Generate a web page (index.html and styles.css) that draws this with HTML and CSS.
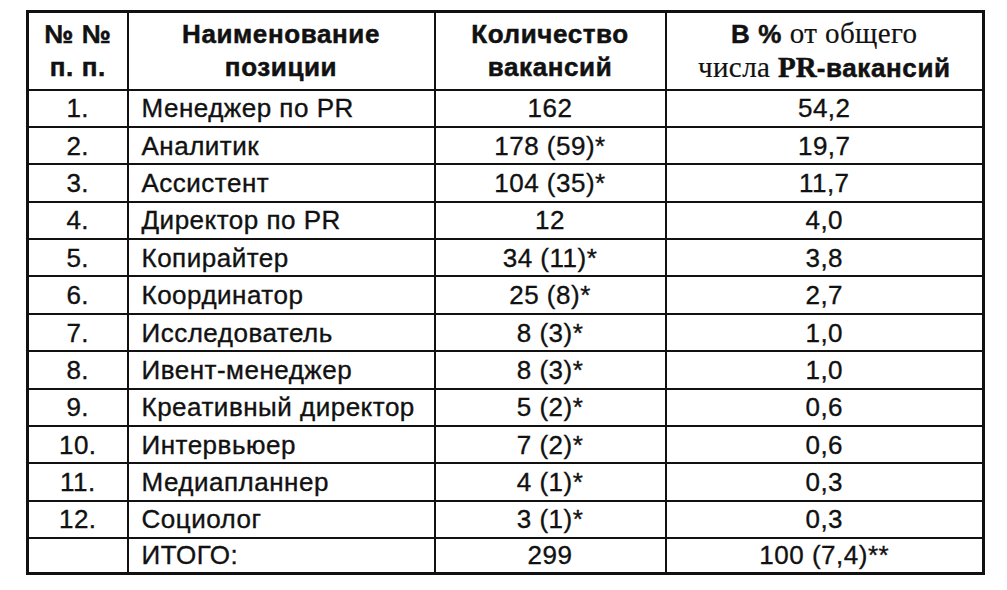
FILE: index.html
```html
<!DOCTYPE html>
<html lang="ru">
<head>
<meta charset="utf-8">
<link rel="stylesheet" href="styles.css">
</head>
<body>
<table class="tbl">
  <colgroup>
    <col class="c1"><col class="c2"><col class="c3"><col class="c4">
  </colgroup>
  <thead>
    <tr class="head">
      <th>№ №<br>п. п.</th>
      <th>Наименование<br>позиции</th>
      <th>Количество<br>вакансий</th>
      <th>В % <span class="serif">от общего</span><br><span class="serif">числа</span> <span class="serif-b">PR</span>-вакансий</th>
    </tr>
  </thead>
  <tbody>
    <tr><td class="num">1.</td><td class="name">Менеджер по PR</td><td class="ctr">162</td><td class="ctr">54,2</td></tr>
    <tr><td class="num">2.</td><td class="name">Аналитик</td><td class="ctr">178 (59)*</td><td class="ctr">19,7</td></tr>
    <tr><td class="num">3.</td><td class="name">Ассистент</td><td class="ctr">104 (35)*</td><td class="ctr">11,7</td></tr>
    <tr><td class="num">4.</td><td class="name">Директор по PR</td><td class="ctr">12</td><td class="ctr">4,0</td></tr>
    <tr><td class="num">5.</td><td class="name">Копирайтер</td><td class="ctr">34 (11)*</td><td class="ctr">3,8</td></tr>
    <tr><td class="num">6.</td><td class="name">Координатор</td><td class="ctr">25 (8)*</td><td class="ctr">2,7</td></tr>
    <tr><td class="num">7.</td><td class="name">Исследователь</td><td class="ctr">8 (3)*</td><td class="ctr">1,0</td></tr>
    <tr><td class="num">8.</td><td class="name">Ивент-менеджер</td><td class="ctr">8 (3)*</td><td class="ctr">1,0</td></tr>
    <tr><td class="num">9.</td><td class="name">Креативный директор</td><td class="ctr">5 (2)*</td><td class="ctr">0,6</td></tr>
    <tr><td class="num">10.</td><td class="name">Интервьюер</td><td class="ctr">7 (2)*</td><td class="ctr">0,6</td></tr>
    <tr><td class="num">11.</td><td class="name">Медиапланнер</td><td class="ctr">4 (1)*</td><td class="ctr">0,3</td></tr>
    <tr><td class="num">12.</td><td class="name">Социолог</td><td class="ctr">3 (1)*</td><td class="ctr">0,3</td></tr>
    <tr class="total"><td class="num"></td><td class="name">ИТОГО:</td><td class="ctr">299</td><td class="ctr">100 (7,4)**</td></tr>
  </tbody>
</table>
</body>
</html>
```

FILE: styles.css
```css
html, body {
  margin: 0;
  padding: 0;
  background: #fff;
}

body {
  padding: 10px 0 0 26px;
  font-family: "Liberation Sans", Arial, sans-serif;
  color: #111;
}

.tbl {
  border-collapse: collapse;
  border: 3px solid #111;
  table-layout: fixed;
  width: 956px;
}

.c1 { width: 100px; }
.c2 { width: 307px; }
.c3 { width: 231px; }
.c4 { width: 318px; }

.tbl th,
.tbl td {
  border: 2px solid #111;
  padding: 0;
  white-space: nowrap;
}

.head {
  height: 78px;
}

.tbl .head th {
  font-weight: 700;
  font-size: 26px;
  line-height: 33px;
  text-align: center;
  vertical-align: middle;
  letter-spacing: 0.6px;
  padding-top: 0;
  -webkit-text-stroke: 0.5px #111;
}

.serif {
  font-family: "Liberation Serif", "Times New Roman", serif;
  font-weight: 400;
  font-size: 29px;
  letter-spacing: 0.4px;
  -webkit-text-stroke: 0.2px #111;
}

.serif-b {
  font-family: "Liberation Serif", "Times New Roman", serif;
  font-weight: 700;
  font-size: 29px;
  letter-spacing: 0;
}

.tbl tbody tr {
  height: 37.4px;
}

.tbl tbody tr.total {
  height: 35px;
}

.tbl td {
  font-size: 26px;
  line-height: 30px;
  letter-spacing: 0.5px;
  vertical-align: middle;
  -webkit-text-stroke: 0.35px #111;
}

.tbl td.num,
.tbl td.ctr {
  text-align: center;
}

.tbl td.name {
  text-align: left;
  padding-left: 13px;
}
```
